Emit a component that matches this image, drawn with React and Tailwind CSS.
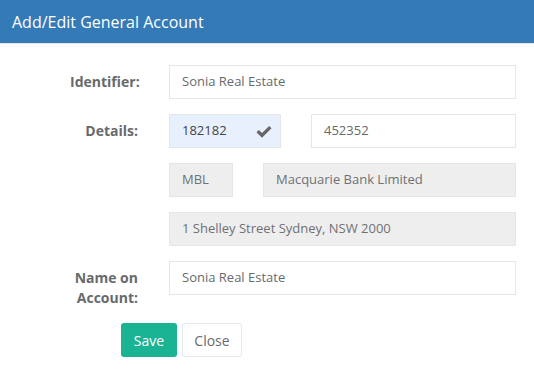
import React from 'react';

const font = { fontFamily: '"Open Sans", "Liberation Sans", sans-serif' };

const Field = ({ value, disabled, className = '' }) => (
  <div
    className={`h-[34px] flex items-center px-3 text-[13px] border ${
      disabled ? 'bg-[#eeeeee] border-[#e5e6e7] text-[#6f7173]' : 'bg-white border-[#e5e6e7] text-[#676a6c]'
    } ${className}`}
  >
    {value}
  </div>
);

const Row = ({ label, children, top = 'items-center' }) => (
  <div className={`flex ${top} mb-[15px]`}>
    <div className="w-[138px] shrink-0 text-right text-[14px] font-bold text-[#676a6c] leading-[20px] pl-[70px]">
      {label}
    </div>
    <div className="ml-[31px] w-[347px] flex flex-col gap-[15px]">{children}</div>
  </div>
);

export default function App() {
  return (
    <div className="w-[534px] h-[375px] bg-white overflow-hidden" style={font}>
      <div className="h-[44px] bg-[#337ab7] border-b border-[#e5e5e5] flex items-center px-3">
        <h1 className="text-white text-[16px] leading-none">Add/Edit General Account</h1>
      </div>

      <div className="pt-[21px]">
        <Row label="Identifier:">
          <Field value="Sonia Real Estate" />
        </Row>

        <Row label="Details:">
          <div className="flex gap-[30px]">
            <div className="w-[112px] h-[34px] flex items-center justify-between pl-3 pr-[8px] text-[13px] bg-[#e8f0fe] border border-[#e5e6e7] text-[#444]">
              182182
              <svg width="16" height="13" viewBox="0 0 16 13" fill="#666">
                <path d="M0.5 7.2 L2.8 4.9 L6 8.1 L13.2 0.9 L15.5 3.2 L6 12.7 Z" />
              </svg>
            </div>
            <Field value="452352" className="flex-1" />
          </div>
        </Row>

        <Row label="">
          <div className="flex gap-[30px]">
            <Field value="MBL" disabled className="w-[64px]" />
            <Field value="Macquarie Bank Limited" disabled className="flex-1" />
          </div>
          <Field value="1 Shelley Street Sydney, NSW 2000" disabled />
        </Row>

        <div className="flex items-start mb-[15px]">
          <div className="w-[138px] shrink-0 text-right text-[14px] font-bold text-[#676a6c] leading-[20px] pl-[70px] pt-[7px]">
            Name on Account:
          </div>
          <div className="ml-[31px] w-[347px]">
            <Field value="Sonia Real Estate" />
          </div>
        </div>

        <div className="flex gap-[5px] pl-[121px]">
          <button className="h-[34px] w-[56px] rounded-[3px] bg-[#1ab394] text-white text-[14px]">
            Save
          </button>
          <button className="h-[34px] w-[60px] rounded-[3px] bg-white border border-[#e7eaec] text-[#676a6c] text-[14px]">
            Close
          </button>
        </div>
      </div>
    </div>
  );
}
